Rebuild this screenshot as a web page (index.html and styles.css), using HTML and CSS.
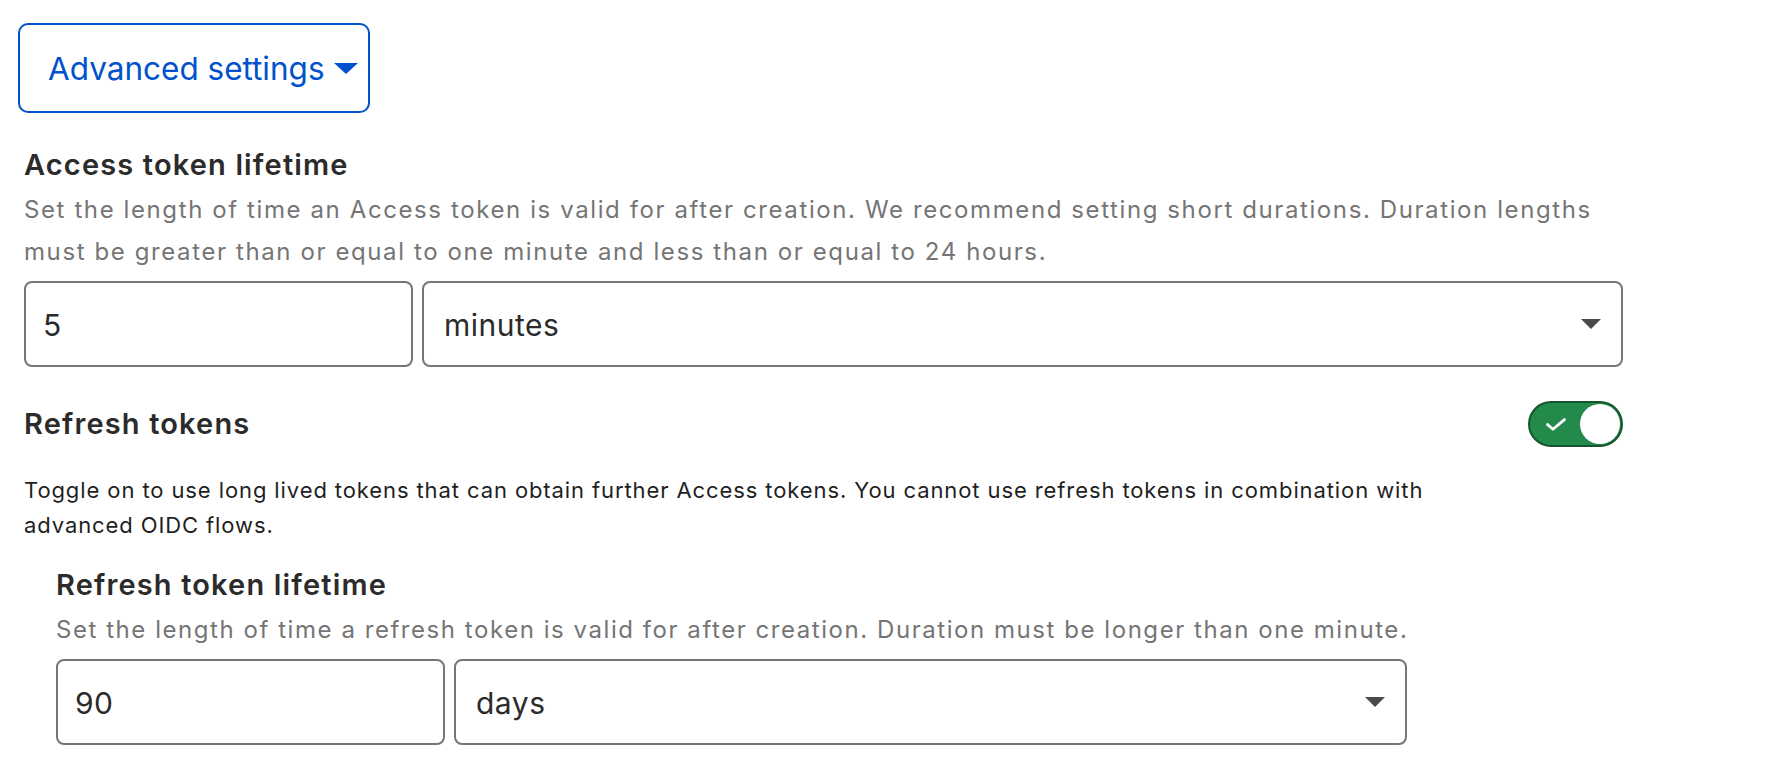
FILE: index.html
```html
<!DOCTYPE html>
<html lang="en">
<head>
<meta charset="utf-8">
<title>Advanced settings</title>
<link rel="stylesheet" href="styles.css">
</head>
<body>
<div class="page">
  <button class="adv-btn" type="button">
    <span>Advanced settings</span>
    <svg class="adv-caret" width="24" height="11" viewBox="0 0 24 11" aria-hidden="true"><path d="M0 0 H24 L12 11 Z" fill="currentColor"/></svg>
  </button>

  <section class="field">
    <h3 class="field-title">Access token lifetime</h3>
    <p class="field-desc">Set the length of time an Access token is valid for after creation. We recommend setting short durations. Duration lengths must be greater than or equal to one minute and less than or equal to 24 hours.</p>
    <div class="duration-row">
      <div class="text-input">5</div>
      <div class="select">
        <span>minutes</span>
        <svg class="select-caret" width="20" height="10" viewBox="0 0 20 10" aria-hidden="true"><path d="M0 0 H20 L10 10 Z" fill="currentColor"/></svg>
      </div>
    </div>
  </section>

  <div class="toggle-row">
    <h3 class="field-title">Refresh tokens</h3>
    <span class="toggle" role="switch" aria-checked="true">
      <svg class="toggle-check" width="20" height="13" viewBox="0 0 20 13" aria-hidden="true"><path d="M1.6 6.6 L7 11.2 L18.4 1.6" fill="none" stroke="#fff" stroke-width="2.8" stroke-linecap="round" stroke-linejoin="round"/></svg>
      <span class="toggle-knob"></span>
    </span>
  </div>
  <p class="toggle-desc">Toggle on to use long lived tokens that can obtain further Access tokens. You cannot use refresh tokens in combination with advanced OIDC flows.</p>

  <section class="field nested">
    <h3 class="field-title">Refresh token lifetime</h3>
    <p class="field-desc">Set the length of time a refresh token is valid for after creation. Duration must be longer than one minute.</p>
    <div class="duration-row">
      <div class="text-input">90</div>
      <div class="select">
        <span>days</span>
        <svg class="select-caret" width="20" height="10" viewBox="0 0 20 10" aria-hidden="true"><path d="M0 0 H20 L10 10 Z" fill="currentColor"/></svg>
      </div>
    </div>
  </section>
</div>
</body>
</html>
```

FILE: styles.css
```css
* { box-sizing: border-box; }

html, body {
  margin: 0;
  padding: 0;
  background: #ffffff;
}

body {
  font-family: "Inter", "Noto Sans", "Liberation Sans", sans-serif;
  color: #2b2b2b;
}

.page {
  width: 1623px;
  padding: 23px 0 0 24px;
  display: flex;
  flex-direction: column;
}

.adv-btn {
  align-self: flex-start;
  margin-left: -6px;
  width: 352px;
  height: 90px;
  display: flex;
  align-items: center;
  gap: 9px;
  padding: 0 0 0 28px;
  border: 2px solid #0052cc;
  border-radius: 10px;
  background: #ffffff;
  color: #0052cc;
  font-family: inherit;
  font-size: 31.5px;
  font-weight: 400;
  cursor: pointer;
}

.adv-caret { flex: none; margin-top: 1px; }

.field {
  display: flex;
  flex-direction: column;
  margin-top: 35px;
}

.field-title {
  margin: 0;
  font-size: 29px;
  line-height: 34px;
  font-weight: 600;
  letter-spacing: 1.15px;
  color: #2b2b2b;
}

.field-desc {
  margin: 7px 0 0;
  max-width: 1575px;
  font-size: 24px;
  line-height: 42px;
  color: #757575;
  letter-spacing: 1.6px;
}

.duration-row {
  display: flex;
  gap: 9px;
  margin-top: 8px;
  height: 86px;
}

.text-input,
.select {
  display: flex;
  align-items: center;
  border: 2px solid #767676;
  border-radius: 8px;
  background: #fff;
  font-size: 30px;
  letter-spacing: 0.5px;
  color: #2b2b2b;
  padding-top: 1px;
}

.text-input {
  width: 389px;
  flex: none;
  padding-left: 17px;
}

.select {
  flex: 1;
  padding-left: 20px;
  padding-right: 20px;
  justify-content: space-between;
}

.select-caret { color: #4a4a4a; margin-top: -1px; }

.toggle-row {
  display: flex;
  align-items: center;
  justify-content: space-between;
  margin-top: 34px;
  height: 46px;
}

.toggle {
  width: 95px;
  height: 46px;
  display: flex;
  align-items: center;
  padding: 0 1px 0 16px;
  border: 2px solid #17552f;
  border-radius: 23px;
  background: #238a4b;
}

.toggle-knob {
  margin-left: auto;
  width: 40px;
  height: 40px;
  border-radius: 50%;
  background: #ffffff;
}

.toggle-desc {
  margin: 26px 0 0;
  max-width: 1445px;
  font-size: 22px;
  line-height: 35px;
  letter-spacing: 0.9px;
  color: #1f1f1f;
}

.field.nested {
  margin-top: 25px;
  margin-left: 32px;
  width: 1351px;
}

.nested .field-desc {
  letter-spacing: 1.55px;
  margin-right: -60px;
  max-width: none;
}
```
